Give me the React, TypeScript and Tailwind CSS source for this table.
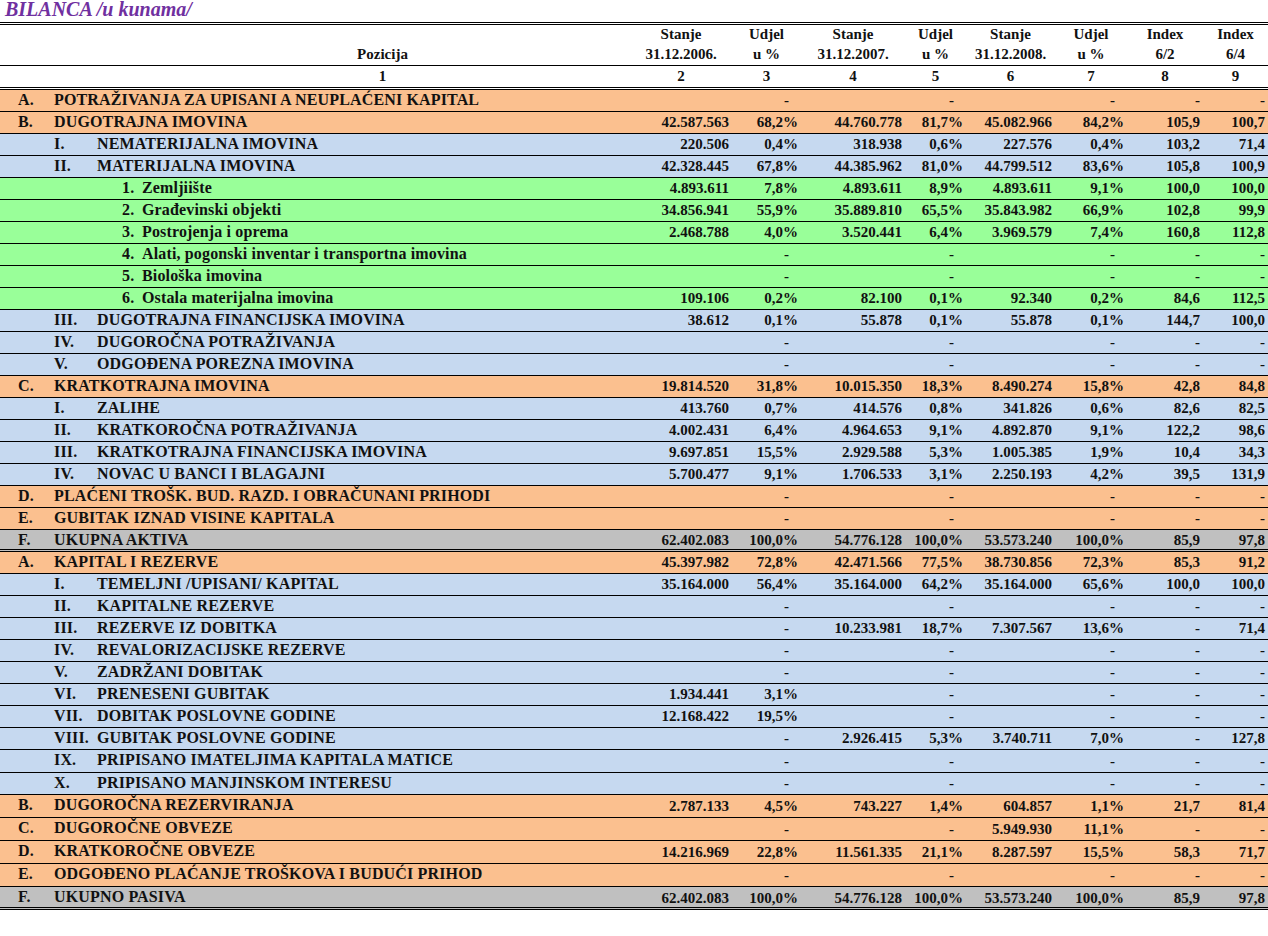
type Row = {
  tone: "o" | "b" | "g" | "x";
  level: 0 | 1 | 2;
  code: string;
  label: string;
  vals: string[];
  tall?: boolean;
  dbl?: boolean;
};

const D = ["", "-", "", "-", "", "-", "-", "-"];

const rows: Row[] = [
  { tone: "o", level: 0, code: "A.", label: "POTRAŽIVANJA ZA UPISANI A NEUPLAĆENI KAPITAL", vals: D },
  { tone: "o", level: 0, code: "B.", label: "DUGOTRAJNA IMOVINA", vals: ["42.587.563", "68,2%", "44.760.778", "81,7%", "45.082.966", "84,2%", "105,9", "100,7"] },
  { tone: "b", level: 1, code: "I.", label: "NEMATERIJALNA IMOVINA", vals: ["220.506", "0,4%", "318.938", "0,6%", "227.576", "0,4%", "103,2", "71,4"] },
  { tone: "b", level: 1, code: "II.", label: "MATERIJALNA IMOVINA", vals: ["42.328.445", "67,8%", "44.385.962", "81,0%", "44.799.512", "83,6%", "105,8", "100,9"] },
  { tone: "g", level: 2, code: "1.", label: "Zemljiište", vals: ["4.893.611", "7,8%", "4.893.611", "8,9%", "4.893.611", "9,1%", "100,0", "100,0"] },
  { tone: "g", level: 2, code: "2.", label: "Građevinski objekti", vals: ["34.856.941", "55,9%", "35.889.810", "65,5%", "35.843.982", "66,9%", "102,8", "99,9"] },
  { tone: "g", level: 2, code: "3.", label: "Postrojenja i oprema", vals: ["2.468.788", "4,0%", "3.520.441", "6,4%", "3.969.579", "7,4%", "160,8", "112,8"] },
  { tone: "g", level: 2, code: "4.", label: "Alati, pogonski inventar i transportna imovina", vals: D },
  { tone: "g", level: 2, code: "5.", label: "Biološka imovina", vals: D },
  { tone: "g", level: 2, code: "6.", label: "Ostala materijalna imovina", vals: ["109.106", "0,2%", "82.100", "0,1%", "92.340", "0,2%", "84,6", "112,5"] },
  { tone: "b", level: 1, code: "III.", label: "DUGOTRAJNA FINANCIJSKA IMOVINA", vals: ["38.612", "0,1%", "55.878", "0,1%", "55.878", "0,1%", "144,7", "100,0"] },
  { tone: "b", level: 1, code: "IV.", label: "DUGOROČNA POTRAŽIVANJA", vals: D },
  { tone: "b", level: 1, code: "V.", label: "ODGOĐENA POREZNA IMOVINA", vals: D },
  { tone: "o", level: 0, code: "C.", label: "KRATKOTRAJNA IMOVINA", vals: ["19.814.520", "31,8%", "10.015.350", "18,3%", "8.490.274", "15,8%", "42,8", "84,8"] },
  { tone: "b", level: 1, code: "I.", label: "ZALIHE", vals: ["413.760", "0,7%", "414.576", "0,8%", "341.826", "0,6%", "82,6", "82,5"] },
  { tone: "b", level: 1, code: "II.", label: "KRATKOROČNA POTRAŽIVANJA", vals: ["4.002.431", "6,4%", "4.964.653", "9,1%", "4.892.870", "9,1%", "122,2", "98,6"] },
  { tone: "b", level: 1, code: "III.", label: "KRATKOTRAJNA FINANCIJSKA IMOVINA", vals: ["9.697.851", "15,5%", "2.929.588", "5,3%", "1.005.385", "1,9%", "10,4", "34,3"] },
  { tone: "b", level: 1, code: "IV.", label: "NOVAC U BANCI I BLAGAJNI", vals: ["5.700.477", "9,1%", "1.706.533", "3,1%", "2.250.193", "4,2%", "39,5", "131,9"] },
  { tone: "o", level: 0, code: "D.", label: "PLAĆENI TROŠK. BUD. RAZD. I OBRAČUNANI PRIHODI", vals: D },
  { tone: "o", level: 0, code: "E.", label: "GUBITAK IZNAD VISINE KAPITALA", vals: D },
  { tone: "x", level: 0, code: "F.", label: "UKUPNA AKTIVA", vals: ["62.402.083", "100,0%", "54.776.128", "100,0%", "53.573.240", "100,0%", "85,9", "97,8"], dbl: true },
  { tone: "o", level: 0, code: "A.", label: "KAPITAL I REZERVE", vals: ["45.397.982", "72,8%", "42.471.566", "77,5%", "38.730.856", "72,3%", "85,3", "91,2"] },
  { tone: "b", level: 1, code: "I.", label: "TEMELJNI /UPISANI/ KAPITAL", vals: ["35.164.000", "56,4%", "35.164.000", "64,2%", "35.164.000", "65,6%", "100,0", "100,0"] },
  { tone: "b", level: 1, code: "II.", label: "KAPITALNE REZERVE", vals: D },
  { tone: "b", level: 1, code: "III.", label: "REZERVE IZ DOBITKA", vals: ["", "-", "10.233.981", "18,7%", "7.307.567", "13,6%", "-", "71,4"] },
  { tone: "b", level: 1, code: "IV.", label: "REVALORIZACIJSKE REZERVE", vals: D },
  { tone: "b", level: 1, code: "V.", label: "ZADRŽANI DOBITAK", vals: D },
  { tone: "b", level: 1, code: "VI.", label: "PRENESENI GUBITAK", vals: ["1.934.441", "3,1%", "", "-", "", "-", "-", "-"] },
  { tone: "b", level: 1, code: "VII.", label: "DOBITAK POSLOVNE GODINE", vals: ["12.168.422", "19,5%", "", "-", "", "-", "-", "-"] },
  { tone: "b", level: 1, code: "VIII.", label: "GUBITAK POSLOVNE GODINE", vals: ["", "-", "2.926.415", "5,3%", "3.740.711", "7,0%", "-", "127,8"] },
  { tone: "b", level: 1, code: "IX.", label: "PRIPISANO IMATELJIMA KAPITALA MATICE", vals: D, tall: true },
  { tone: "b", level: 1, code: "X.", label: "PRIPISANO MANJINSKOM INTERESU", vals: D },
  { tone: "o", level: 0, code: "B.", label: "DUGOROČNA REZERVIRANJA", vals: ["2.787.133", "4,5%", "743.227", "1,4%", "604.857", "1,1%", "21,7", "81,4"], tall: true },
  { tone: "o", level: 0, code: "C.", label: "DUGOROČNE OBVEZE", vals: ["", "-", "", "-", "5.949.930", "11,1%", "-", "-"], tall: true },
  { tone: "o", level: 0, code: "D.", label: "KRATKOROČNE OBVEZE", vals: ["14.216.969", "22,8%", "11.561.335", "21,1%", "8.287.597", "15,5%", "58,3", "71,7"], tall: true },
  { tone: "o", level: 0, code: "E.", label: "ODGOĐENO PLAĆANJE TROŠKOVA I BUDUĆI PRIHOD", vals: D, tall: true },
  { tone: "x", level: 0, code: "F.", label: "UKUPNO PASIVA", vals: ["62.402.083", "100,0%", "54.776.128", "100,0%", "53.573.240", "100,0%", "85,9", "97,8"], tall: true, dbl: true },
];

const toneBg: Record<Row["tone"], string> = {
  o: "bg-[#fbc08f]",
  b: "bg-[#c6d9f0]",
  g: "bg-[#99ff99]",
  x: "bg-[#c0c0c0]",
};

const cols = "grid grid-cols-[630px_102px_69px_104px_61px_89px_72px_76px_65px]";

// label column: code + text, indent by level
function Label({ row }: { row: Row }) {
  const base = "flex text-[16px] tracking-[0.15px] -mt-[1px]";
  if (row.level === 0) {
    return (
      <div className={base}>
        <span className="w-[54px] pl-[18px]">{row.code}</span>
        <span>{row.label}</span>
      </div>
    );
  }
  if (row.level === 1) {
    return (
      <div className={base}>
        <span className="w-[54px]" />
        <span className="w-[43px]">{row.code}</span>
        <span>{row.label}</span>
      </div>
    );
  }
  return (
    <div className={base}>
      <span className="w-[122px]" />
      <span className="w-[20px]">{row.code}</span>
      <span>{row.label}</span>
    </div>
  );
}

export default function App() {
  return (
    <div
      className="w-[1268px] h-[936px] bg-white text-[#111] font-bold text-[15px]"
      style={{ fontFamily: '"Liberation Serif", "Times New Roman", serif' }}
    >
      <div className="h-[22px] pl-[5px] text-[20px] leading-[19px] italic text-[#7030a0]">
        BILANCA /u kunama/
      </div>

      <div className="border-t-[3px] border-double border-black">
        <div className={`${cols} h-[41px] border-b border-black text-center`}>
          <div className="pl-[135px] pt-[18px] leading-[22px]">Pozicija</div>
          {[
            ["Stanje", "31.12.2006."],
            ["Udjel", "u %"],
            ["Stanje", "31.12.2007."],
            ["Udjel", "u %"],
            ["Stanje", "31.12.2008."],
            ["Udjel", "u %"],
            ["Index", "6/2"],
            ["Index", "6/4"],
          ].map(([a, b], i) => (
            <div key={i} className="flex flex-col">
              <span className="h-[18px] leading-[18px]">{a}</span>
              <span className="h-[22px] leading-[22px]">{b}</span>
            </div>
          ))}
        </div>
        <div className={`${cols} h-[24px] border-b-[3px] border-double border-black leading-[21px] text-center`}>
          <div className="pl-[135px]">1</div>
          {["2", "3", "4", "5", "6", "7", "8", "9"].map((n) => (
            <div key={n}>{n}</div>
          ))}
        </div>
      </div>

      {rows.map((row, i) => (
        <div
          key={i}
          className={`${cols} ${toneBg[row.tone]} ${row.tall ? "h-[23px] leading-[22px]" : "h-[22px] leading-[21px]"} ${
            row.dbl ? "border-b-[3px] border-double" : "border-b"
          } border-black whitespace-nowrap`}
        >
          <Label row={row} />
          {row.vals.map((v, j) => (
            <div
              key={j}
              className={`text-right ${v === "-" && (j === 1 || j === 3 || j === 5) ? "pr-[12px]" : "pr-[3px]"}`}
            >
              {v}
            </div>
          ))}
        </div>
      ))}
    </div>
  );
}
